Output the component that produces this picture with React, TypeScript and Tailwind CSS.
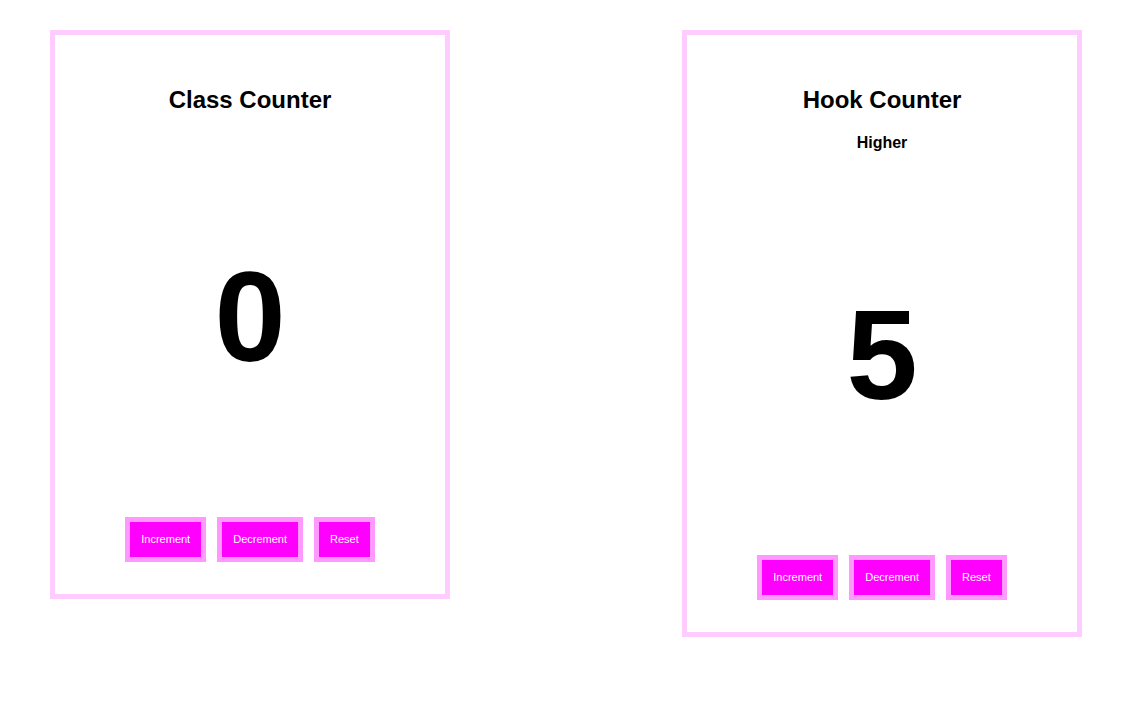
import React from "react";

function Btn({ label }: { label: string }) {
  return (
    <button className="border-[5px] border-[#ff99ff] bg-[#ff00ff] text-white text-[11px] leading-[13px] px-[11px] py-[11px]">
      {label}
    </button>
  );
}

function Card({ title, sub, value }: { title: string; sub?: string; value: number }) {
  return (
    <div className="w-[400px] border-[5px] border-[#ffccff] flex flex-col items-center pt-[51px] pb-[32px]">
      <h2 className="text-[24px] font-bold leading-[28px] text-black">{title}</h2>
      {sub && <h4 className="mt-[20px] text-[16px] font-bold leading-[18px] text-black">{sub}</h4>}
      <div className="mt-[139px] text-[128px] font-bold leading-[128px] text-black">{value}</div>
      <div className="mt-[136px] flex gap-[11px]">
        <Btn label="Increment" />
        <Btn label="Decrement" />
        <Btn label="Reset" />
      </div>
    </div>
  );
}

export default function App() {
  return (
    <div className="min-h-[706px] bg-white flex items-start pt-[30px] pl-[50px] gap-[232px] font-['Liberation_Sans',Arial,Helvetica,sans-serif]">
      <Card title="Class Counter" value={0} />
      <Card title="Hook Counter" sub="Higher" value={5} />
    </div>
  );
}
